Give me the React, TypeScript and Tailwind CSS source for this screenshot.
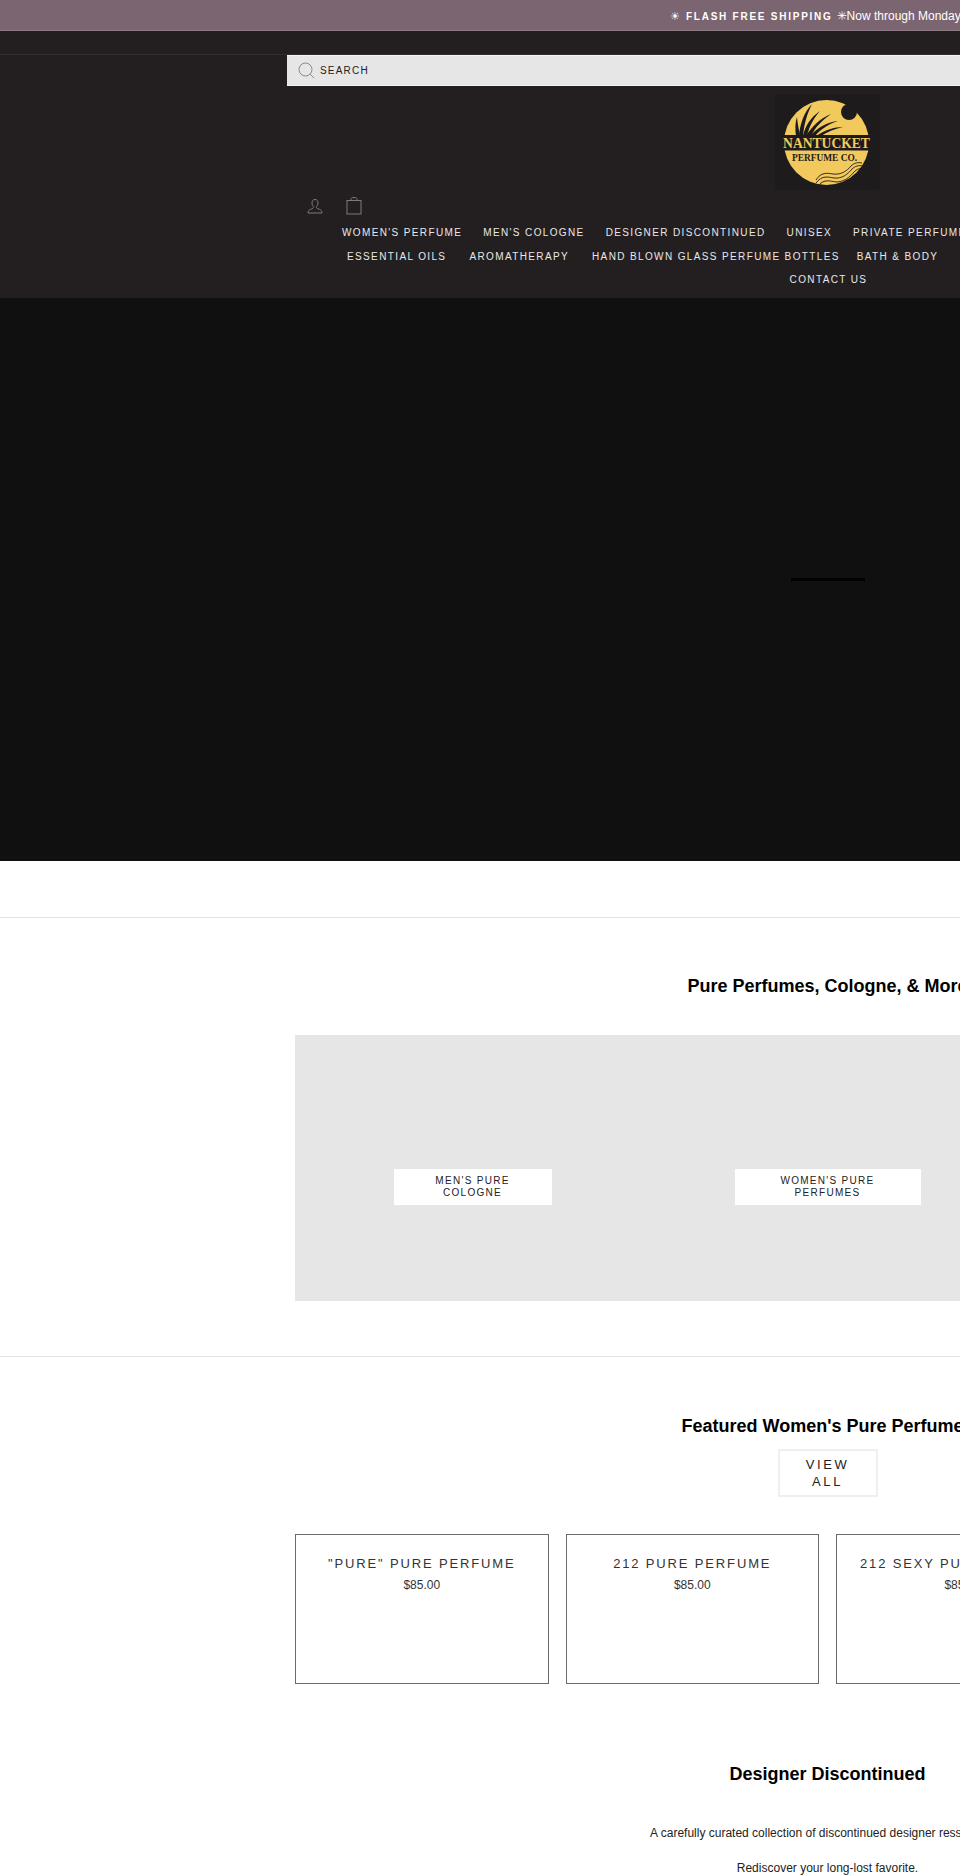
import { CSSProperties } from 'react';

const font: CSSProperties = { fontFamily: '"Liberation Sans", Arial, sans-serif' };

function Logo() {
  return (
    <svg width="105" height="96" viewBox="0 0 105 96" className="block">
      <rect width="105" height="96" rx="3" fill="#1e1b1c" />
      <circle cx="51.5" cy="48.5" r="42.5" fill="#f2c95c" />
      {/* moon */}
      <circle cx="74" cy="18" r="8" fill="#1e1b1c" />
      {/* band */}
      <rect x="8" y="41" width="87" height="15.5" fill="#1e1b1c" />
      {/* grass */}
      <g fill="#1e1b1c">
        <path d="M21 42 C20 35 20 29 22 23 C22.5 30 24 35 25 42 Z" />
        <path d="M24 42 C25 30 29 18 37 10 C32 20 29 30 28 42 Z" />
        <path d="M28 42 C30 32 36 23 45 17 C38 25 34 33 32 42 Z" />
        <path d="M31 42 C37 32 46 24 56 20 C46 27 40 34 36 42 Z" />
        <path d="M35 42 C43 33 53 28 63 27 C53 30 45 36 40 42 Z" />
        <path d="M41 42 C50 36 59 33 68 33 C59 35 52 38 46 42 Z" />
      </g>
      <text x="51.5" y="54" textAnchor="middle" fontFamily='"Liberation Serif", serif' fontWeight="700" fontSize="13.6" fill="#f2c95c">NANTUCKET</text>
      <text x="49.5" y="67" textAnchor="middle" fontFamily='"Liberation Serif", serif' fontWeight="700" fontSize="9.4" fill="#1e1b1c">PERFUME CO.</text>
      {/* waves */}
      <g fill="none" stroke="#1e1b1c" strokeWidth="0.9">
        <path d="M41 86 C46 78 52 79 58 80 C66 81 72 77 76 72 C79 69 83 68 87 69" />
        <path d="M41 89 C47 81 53 83 59 84 C67 85 73 80 77 75 C80 72 84 71 88 72" />
        <path d="M44 91 C49 85 55 87 61 88 C69 88 75 83 79 78 C82 75 85 74 87 75" />
      </g>
    </svg>
  );
}

function Card({ title }: { title: string }) {
  return (
    <div className="h-[150px] border border-[#6b6b6b] pt-[20px] text-center text-[#333]">
      <div className="whitespace-nowrap text-[13px] leading-[18px] tracking-[1.85px]">{title}</div>
      <div className="mt-[4px] text-[12px] leading-[16px]">$85.00</div>
    </div>
  );
}

export default function App() {
  return (
    <div className="h-[1875px] w-[960px] overflow-hidden bg-white" style={font}>
      {/* Announcement */}
      <div className="h-[31px] whitespace-nowrap border-b border-[#8b7883] bg-[#7b6570] pl-[670px] leading-[29px] text-white">
        <span className="text-[11px]">☀</span>
        <span className="ml-[6px] text-[10px] font-bold tracking-[1.75px]">FLASH FREE SHIPPING</span>
        <span className="ml-[4px] text-[12px]">✳Now through Monday</span>
      </div>

      {/* Header */}
      <div className="h-[267px] bg-[#231f20]">
        <div className="h-[24px] border-b border-[#35302f]" />
        <div className="ml-[287px] flex h-[31px] items-center border-y border-[#f4f4f4] bg-[#e6e6e6] pl-[11px]">
          <svg width="17" height="17" viewBox="0 0 17 17" fill="none" stroke="#8a8a8a" strokeWidth="1">
            <circle cx="7.5" cy="7.5" r="6.5" />
            <path d="M12.3 12.3 L16 16" />
          </svg>
          <span className="ml-[5px] text-[10px] tracking-[1.2px] text-[#222]">SEARCH</span>
        </div>
        <div className="ml-[295px] w-[1065px]">
          <div className="mt-[8px] flex justify-center">
            <Logo />
          </div>
          <div className="ml-[12px] mt-[7px] flex h-[18px] gap-[23px]">
            <svg width="16" height="16" viewBox="0 0 16 16" fill="none" stroke="#7d7a7b" strokeWidth="1" className="mt-[1px]">
              <path d="M8 1.5 C5.8 1.5 5 3.2 5 5 C5 6.8 5.8 8 6.6 8.8 C6.8 10 5.5 10.7 3.5 11.4 C1.8 12 1 13 1 15 H15 C15 13 14.2 12 12.5 11.4 C10.5 10.7 9.2 10 9.4 8.8 C10.2 8 11 6.8 11 5 C11 3.2 10.2 1.5 8 1.5 Z" />
            </svg>
            <svg width="16" height="18" viewBox="0 0 16 18" fill="none" stroke="#7d7a7b" strokeWidth="1">
              <rect x="1" y="3.5" width="14" height="13.5" />
              <path d="M5 3.5 V2.5 C5 1 6 .5 8 .5 C10 .5 11 1 11 2.5 V3.5" />
            </svg>
          </div>
          <div className="text-[10px] leading-[23.5px] tracking-[1.37px] text-[#e8e8e8]">
            <div className="ml-[47px] mt-[6px] flex gap-[21px] whitespace-nowrap">
              <span>WOMEN'S PERFUME</span>
              <span>MEN'S COLOGNE</span>
              <span>DESIGNER DISCONTINUED</span>
              <span>UNISEX</span>
              <span>PRIVATE PERFUMES</span>
            </div>
            <div className="ml-[52px] flex gap-[23px] whitespace-nowrap">
              <span>ESSENTIAL OILS</span>
              <span>AROMATHERAPY</span>
              <span>HAND BLOWN GLASS PERFUME BOTTLES</span>
              <span className="-ml-[6px]">BATH &amp; BODY</span>
            </div>
            <div className="pl-[2px] text-center">CONTACT US</div>
          </div>
        </div>
      </div>

      {/* Hero */}
      <div className="h-[563px] bg-[#101010] pt-[280px]">
        <div className="ml-[791px] h-[3px] w-[74px] bg-black" />
      </div>

      <div className="h-[56px]" />

      {/* Pure Perfumes */}
      <div className="h-[439px] border-t border-[#e3e3e3]">
        <div className="ml-[295px] w-[1065px]">
          <h2 className="mt-[55px] text-center text-[18px] font-bold leading-[26px] text-black">Pure Perfumes, Cologne, &amp; More</h2>
          <div className="mt-[36px] grid h-[266px] grid-cols-3 items-center justify-items-center bg-[#e6e6e6] pt-[38px]">
            <div className="w-[158px] bg-white px-[30px] py-[6px] text-center text-[10px] leading-[12px] tracking-[1.3px] text-[#222]">MEN'S PURE COLOGNE</div>
            <div className="w-[186px] bg-white px-[30px] py-[6px] text-center text-[10px] leading-[12px] tracking-[1.3px] text-[#222]">WOMEN'S PURE PERFUMES</div>
          </div>
        </div>
      </div>

      {/* Featured */}
      <div className="border-t border-[#e3e3e3]">
        <div className="ml-[295px] w-[1065px]">
          <h2 className="mt-[56px] text-center text-[18px] font-bold leading-[26px] text-black">Featured Women's Pure Perfumes</h2>
          <div className="mt-[10px] flex justify-center">
            <div className="w-[100px] border-2 border-[#efefef] px-[20px] py-[5px] text-center text-[13px] leading-[17px] tracking-[2.6px] text-[#222]">VIEW ALL</div>
          </div>
          <div className="mt-[37px] grid grid-cols-4 gap-[17px]">
            <Card title={'"PURE" PURE PERFUME'} />
            <Card title="212 PURE PERFUME" />
            <Card title="212 SEXY PURE PERFUME" />
          </div>

          {/* Designer Discontinued */}
          <h2 className="mt-[77px] text-center text-[18px] font-bold leading-[26px] text-black">Designer Discontinued</h2>
          <p className="mt-[36px] whitespace-nowrap text-center text-[12px] leading-[20px] text-[#222]">A carefully curated collection of discontinued designer ressurected.</p>
          <p className="mt-[15px] text-center text-[12px] leading-[20px] text-[#222]">Rediscover your long-lost favorite.</p>
        </div>
      </div>
    </div>
  );
}
